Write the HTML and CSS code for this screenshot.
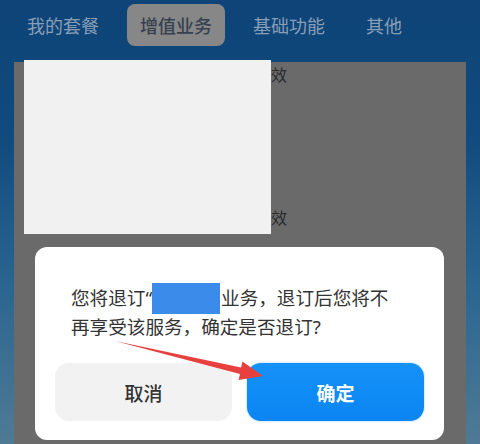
FILE: index.html
```html
<!doctype html>
<html>
  <head>
    <meta charset="utf-8">
    <title>退订业务</title>
    <link rel="stylesheet" href="styles.css">
  </head>
  <body>
    <div class="page">
      <div class="tabs">
        <span class="tab">我的套餐</span>
        <span class="tab active">增值业务</span>
        <span class="tab">基础功能</span>
        <span class="tab">其他</span>
      </div>

      <div class="panel">
        <div class="row">
          <span class="row-name">业务名称</span>
          <span class="row-desc">有效</span>
        </div>
        <div class="row second">
          <span class="row-name">业务名称</span>
          <span class="row-desc">有效</span>
        </div>
        <!-- 打码区域 -->
        <div class="mask"></div>
      </div>

      <!-- 退订确认弹窗 -->
      <div class="dialog">
        <p class="dialog-text">您将退订“<span class="hidden-name"></span>业务，退订后您将不<br>再享受该服务，确定是否退订?</p>
        <div class="dialog-buttons">
          <button class="btn btn-cancel">取消</button>
          <button class="btn btn-ok">确定</button>
        </div>
      </div>

      <svg class="arrow" width="480" height="444" viewBox="0 0 480 444">
        <polygon points="115,341 241,367.5 242.5,361.5 263,376 238.5,380 240,374" fill="#e8403f"/>
      </svg>
    </div>
  </body>
</html>
```

FILE: styles.css
```css
/* Estilos gerais */
body {
  margin: 0;
  padding: 0;
  font-family: "Noto Sans CJK SC", "Noto Sans", sans-serif;
}

.page {
  position: relative;
  width: 480px;
  height: 444px;
  overflow: hidden;
  background: linear-gradient(180deg, #0e4478 0%, #104a7e 30%, #2b6690 65%, #4f7a95 100%);
}

/* Abas */
.tabs {
  display: flex;
  align-items: center;
  gap: 15px;
  padding: 4px 14px 0;
  height: 42px;
}

.tab {
  padding: 0 13px;
  font-size: 18px;
  line-height: 42px;
  color: #889eb6;
  white-space: nowrap;
}

.tab.active {
  background-color: #878787;
  border-radius: 8px;
  color: #364150;
  font-weight: 500;
}

/* Lista */
.panel {
  position: relative;
  margin: 16px 14px 0;
  height: 400px;
  background-color: #6a6a6a;
}

.row {
  display: flex;
  height: 24px;
  align-items: center;
  padding-left: 14px;
  font-size: 16px;
  color: #2a2a2a;
}

.row.second {
  margin-top: 119px;
}

.row-name {
  width: 227px;
}

.mask {
  position: absolute;
  left: 10px;
  top: -2px;
  width: 247px;
  height: 174px;
  background-color: #f1f1f1;
}

/* Janela de confirmação */
.dialog {
  position: absolute;
  left: 35px;
  top: 247px;
  width: 409px;
  height: 193px;
  background-color: #fff;
  border-radius: 12px;
  box-sizing: border-box;
  padding: 36px 20px 0;
}

.dialog-text {
  margin: 0 16px;
  font-family: "Noto Sans", "Noto Sans CJK SC", sans-serif;
  font-size: 18.6px;
  line-height: 25px;
  color: #333;
  white-space: nowrap;
}

.hidden-name {
  display: inline-block;
  width: 68px;
  height: 31px;
  margin-left: 0;
  margin-right: 1px;
  vertical-align: -9px;
  background-color: #3b8beb;
}

.dialog-buttons {
  display: flex;
  gap: 15px;
  margin-top: 24px;
}

.btn {
  width: 177px;
  height: 58px;
  border: none;
  border-radius: 14px;
  font-family: inherit;
  font-size: 19px;
}

.btn-cancel {
  background-color: #f2f2f2;
  color: #333;
  font-weight: 500;
}

.btn-ok {
  background: linear-gradient(180deg, #1592f8, #0a85f2);
  color: #fff;
  font-weight: 700;
  box-shadow: 0 0 2px #7cc0fb;
}

.arrow {
  position: absolute;
  left: 0;
  top: 0;
}
```
